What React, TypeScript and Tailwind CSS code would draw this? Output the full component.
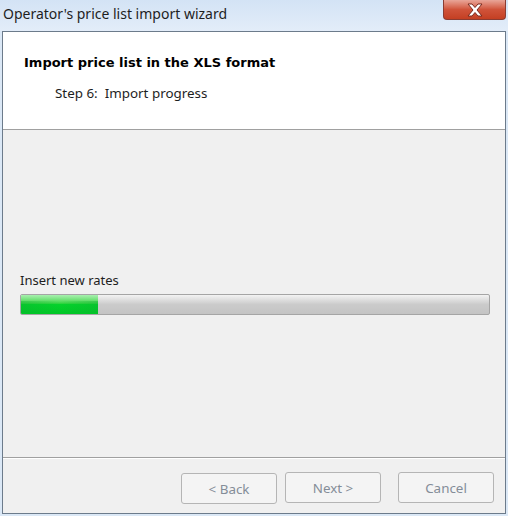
import _React from "react";

const WizardButton = ({ label, className }: { label: string; className?: string }) => {
  return (
    <button
      type="button"
      disabled
      className={`h-[31px] w-[96px] rounded-[3px] border border-[#b5b5b5] bg-[#f4f4f4] pt-[2px] text-[13.4px] text-[#848d98] ${className ?? ""}`}
      style={{ fontFamily: '"Noto Sans", sans-serif' }}>
      {label}
    </button>
  );
};

const App = () => {
  return (
    <div className="flex h-[516px] w-[508px] flex-col overflow-hidden bg-[#dbe8f6]">
      {/* Title bar */}
      <div className="relative flex h-[31px] shrink-0 items-start bg-gradient-to-b from-[#d3e3f5] to-[#e3edf9] pl-[3px] pt-[5px]">
        <span
          className="text-[14px] leading-[18px] text-[#1e1e1e]"
          style={{ fontFamily: '"Noto Sans", sans-serif' }}>
          Operator&apos;s price list import wizard
        </span>
        {/* Close button */}
        <div className="absolute right-[2px] top-0 flex h-[20px] w-[63px] items-center justify-center rounded-b-[4px] border border-t-0 border-[#8a3c32] bg-gradient-to-b from-[#e8a598] via-[#d0533a] to-[#c43f22]">
          <svg width="18" height="14" viewBox="0 0 18 14">
            <path
              d="M2 1 L6 1 L9 4.5 L12 1 L16 1 L11 7 L16 13 L12 13 L9 9.5 L6 13 L2 13 L7 7 Z"
              fill="#ffffff"
              stroke="#7a2a1e"
              strokeWidth="1"
              strokeLinejoin="round"
            />
          </svg>
        </div>
      </div>

      {/* Client area */}
      <div className="mx-[2px] mb-[2px] flex flex-1 flex-col border border-[#6c7b8b] bg-[#f0f0f0]">
        {/* Header */}
        <div className="h-[98px] shrink-0 border-b border-[#a0a0a0] bg-white">
          <div
            className="pl-[21px] pt-[22px] text-[13px] font-bold leading-[18px] text-black"
            style={{ fontFamily: '"DejaVu Sans", sans-serif' }}>
            Import price list in the XLS format
          </div>
          <div
            className="pl-[52px] pt-[12px] text-[13.4px] leading-[18px] text-[#1e1e1e]"
            style={{ fontFamily: '"Noto Sans", sans-serif' }}>
            Step 6:&nbsp; Import progress
          </div>
        </div>

        {/* Body */}
        <div className="flex flex-1 flex-col justify-end px-[17px] pb-[142px]">
          <div
            className="mb-[5px] text-[13px] leading-[18px] text-[#1e1e1e]"
            style={{ fontFamily: '"Noto Sans", sans-serif' }}>
            Insert new rates
          </div>
          <div className="relative h-[21px] w-[470px] overflow-hidden rounded-[2px] border border-[#a5a5a5] bg-gradient-to-b from-[#f3f3f3] via-[#cbcbcb] to-[#c4c4c4]">
            <div className="absolute inset-y-0 left-0 w-[77px] bg-gradient-to-b from-[#a8f0b0] via-[#06d22c] to-[#00c726]" />
            <div className="absolute left-0 top-[6px] h-[12px] w-[77px] bg-gradient-to-r from-[#0db031] via-transparent to-[#0db031] opacity-40" />
          </div>
        </div>

        {/* Footer */}
        <div className="flex h-[56px] shrink-0 items-start border-t border-[#a0a0a0] pt-[14px] shadow-[inset_0_1px_0_#ffffff]">
          <div className="ml-[178px] flex items-start gap-[8px]">
            <WizardButton label="< Back" className="mt-[1px]" />
            <WizardButton label="Next >" />
          </div>
          <WizardButton label="Cancel" className="ml-[17px]" />
        </div>
      </div>
    </div>
  );
};

export default App;
